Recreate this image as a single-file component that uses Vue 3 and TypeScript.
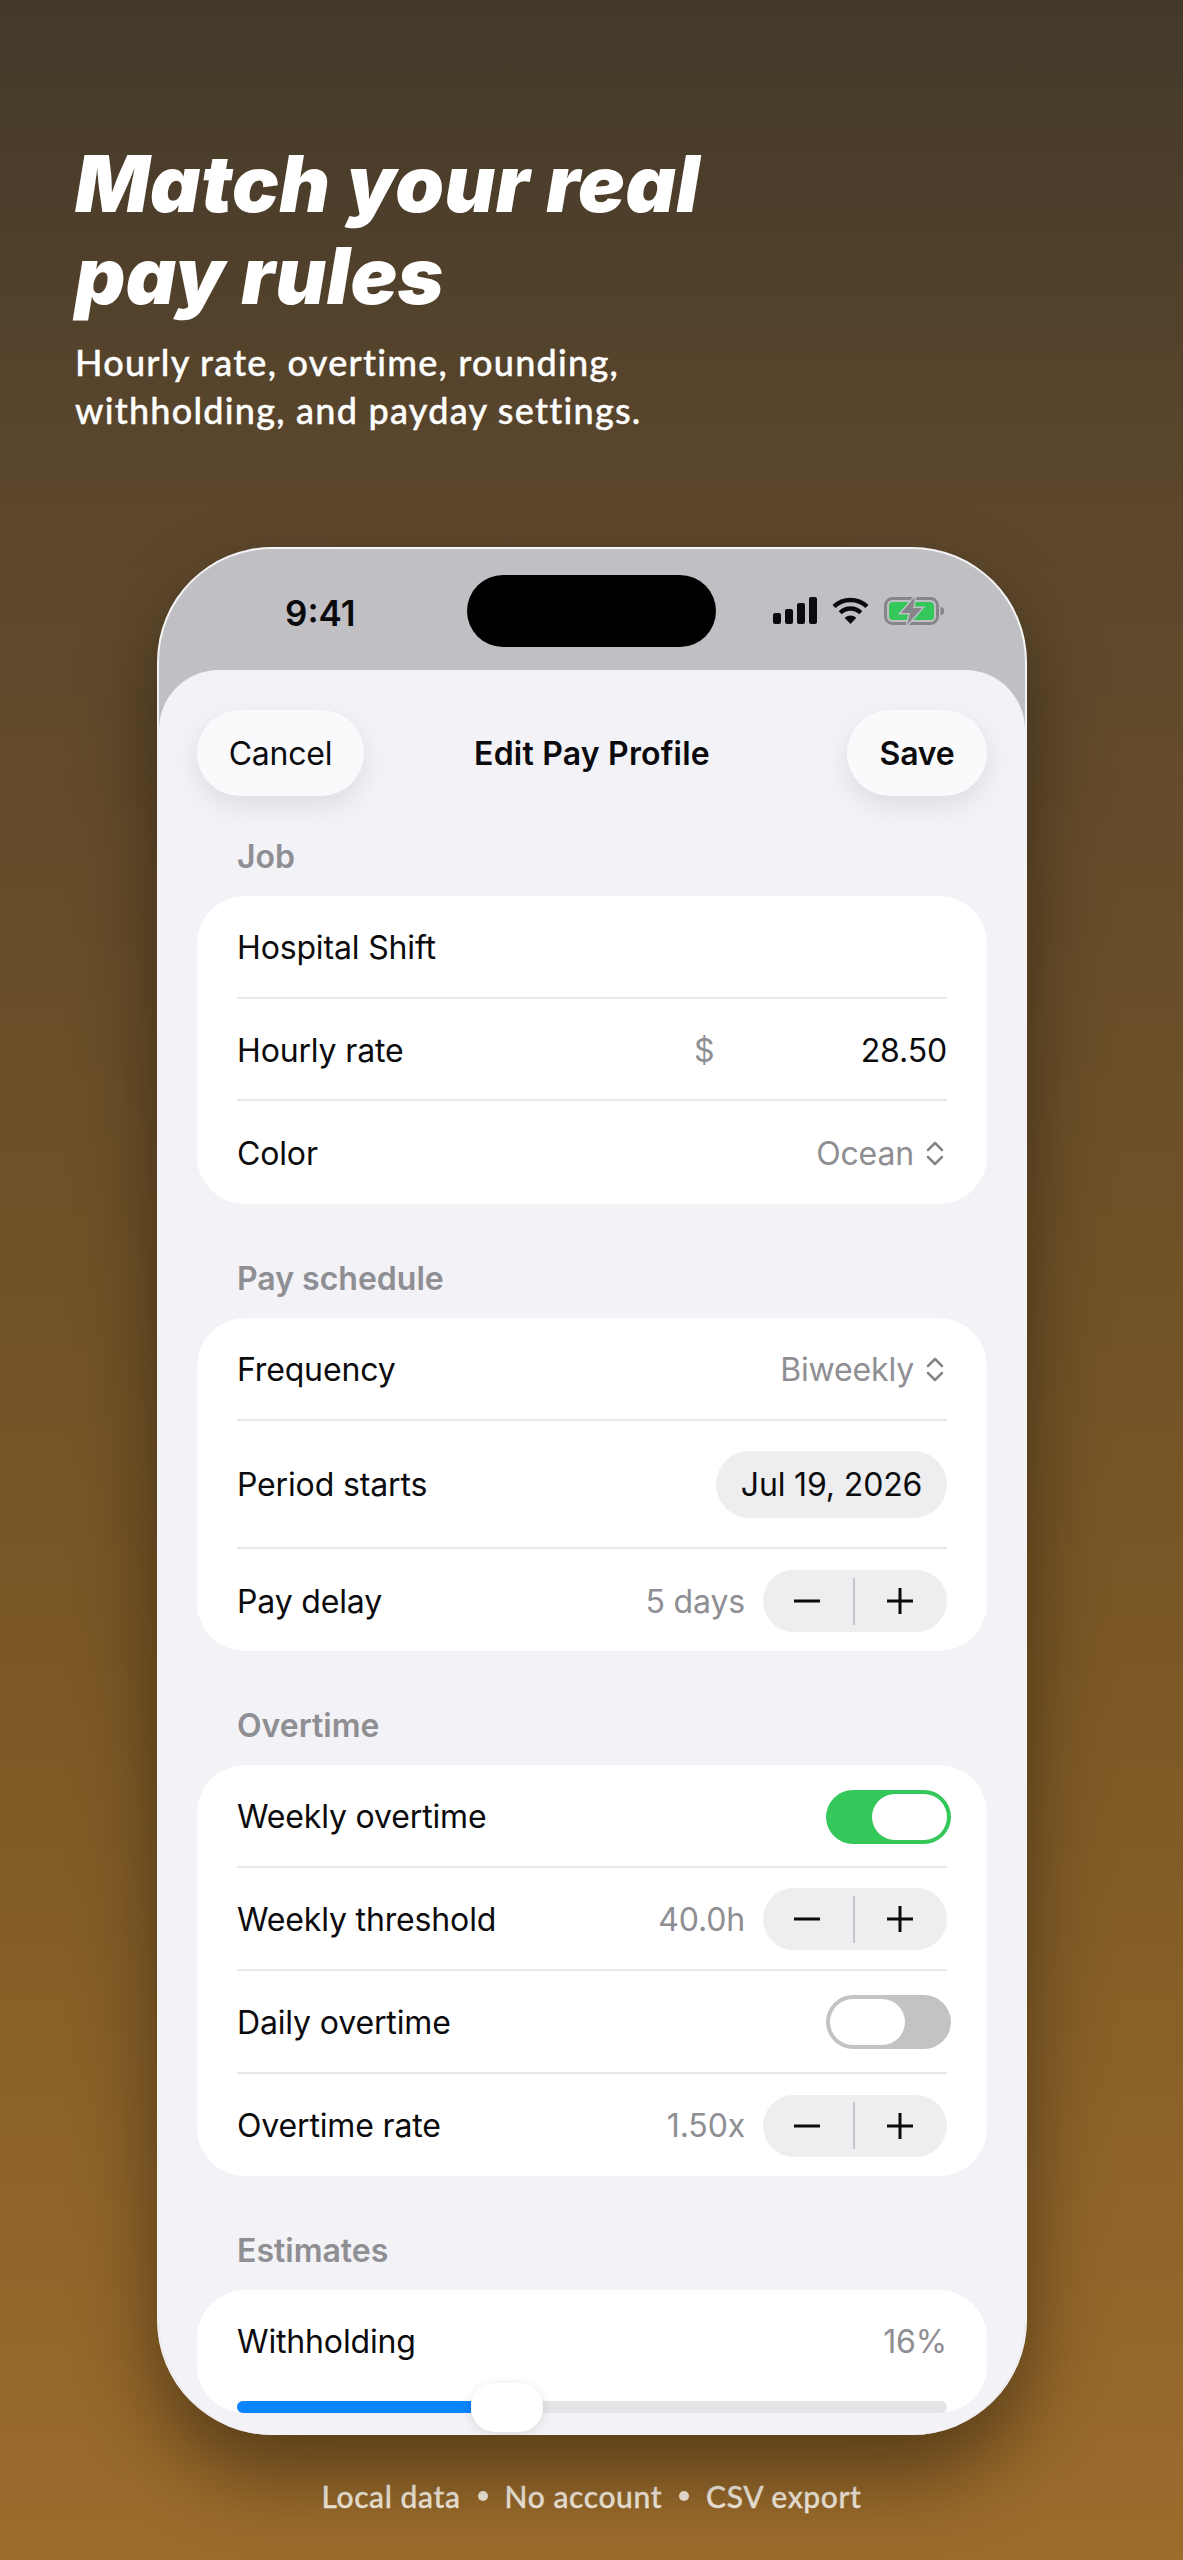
<script setup lang="ts">
type Stepper = { label: string; value: string };

const scheduleStepper: Stepper = { label: "Pay delay", value: "5 days" };
const thresholdStepper: Stepper = { label: "Weekly threshold", value: "40.0h" };
const rateStepper: Stepper = { label: "Overtime rate", value: "1.50x" };
const withholding = 33;
</script>

<template>
  <div class="page">
    <header class="hero">
      <h1 class="hero-title">Match your real<br />pay rules</h1>
      <p class="hero-sub">Hourly rate, overtime, rounding,<br />withholding, and payday settings.</p>
    </header>

    <div class="phone">
      <div class="status">
        <span class="time">9:41</span>
        <div class="island"></div>
        <div class="status-icons">
          <svg width="44" height="27" viewBox="0 0 44 27" fill="#0b0b0d">
            <rect x="0" y="16" width="8" height="11" rx="2" />
            <rect x="12" y="12" width="8" height="15" rx="2" />
            <rect x="24" y="6" width="8" height="21" rx="2" />
            <rect x="36" y="0" width="8" height="27" rx="2" />
          </svg>
          <svg width="37" height="27" viewBox="0 0 37 27" fill="none">
            <path d="M2 9.5A24 24 0 0 1 35 9.5" stroke="#0b0b0d" stroke-width="4.4" />
            <path d="M8.2 15.8A14.6 14.6 0 0 1 28.8 15.8" stroke="#0b0b0d" stroke-width="4.4" />
            <path d="M12.6 20.8Q18.5 16.4 24.4 20.8L18.5 27Z" fill="#0b0b0d" />
          </svg>
          <svg width="61" height="28" viewBox="0 0 61 28" fill="none">
            <rect x="1.5" y="1.5" width="52" height="25" rx="7" stroke="#86868a" stroke-width="3" />
            <rect x="5" y="5" width="45" height="18" rx="4" fill="#34c759" />
            <path d="M56.500 9.500c2.500.6 3.800 2.400 3.800 4.500s-1.300 3.900-3.800 4.500z" fill="#86868a" />
            <path d="M31 0 17 16h9L23 28 38 11h-9z" fill="#86868a" stroke="#c0c0c4" stroke-width="3" paint-order="stroke" />
          </svg>
        </div>
      </div>

      <div class="sheet">
        <div class="nav">
          <button class="nav-btn cancel">Cancel</button>
          <div class="nav-title">Edit Pay Profile</div>
          <button class="nav-btn save">Save</button>
        </div>

        <div class="section-label first">Job</div>
        <div class="card">
          <div class="row"><span>Hospital Shift</span></div>
          <div class="row">
            <span>Hourly rate</span>
            <span class="rate"><span class="muted">$</span><span>28.50</span></span>
          </div>
          <div class="row">
            <span>Color</span>
            <span class="picker">Ocean
              <svg width="18" height="25" viewBox="0 0 18 25" fill="none" stroke="#86868a" stroke-width="2.500" stroke-linecap="round" stroke-linejoin="round">
                <path d="M2 9 9 2l7 7M2 16l7 7 7-7" />
              </svg>
            </span>
          </div>
        </div>

        <div class="section-label">Pay schedule</div>
        <div class="card">
          <div class="row">
            <span>Frequency</span>
            <span class="picker">Biweekly
              <svg width="18" height="25" viewBox="0 0 18 25" fill="none" stroke="#86868a" stroke-width="2.500" stroke-linecap="round" stroke-linejoin="round">
                <path d="M2 9 9 2l7 7M2 16l7 7 7-7" />
              </svg>
            </span>
          </div>
          <div class="row tall">
            <span>Period starts</span>
            <span class="date-pill">Jul 19, 2026</span>
          </div>
          <div class="row">
            <span>{{ scheduleStepper.label }}</span>
            <div class="stepper-wrap">
              <span class="muted">{{ scheduleStepper.value }}</span>
              <div class="stepper">
                <svg width="26" height="26" viewBox="0 0 26 26" stroke="#0b0b0d" stroke-width="3"><path d="M0 13h26" /></svg>
                <i class="stepper-line"></i>
                <svg width="26" height="26" viewBox="0 0 26 26" stroke="#0b0b0d" stroke-width="3"><path d="M0 13h26M13 0v26" /></svg>
              </div>
            </div>
          </div>
        </div>

        <div class="section-label">Overtime</div>
        <div class="card">
          <div class="row">
            <span>Weekly overtime</span>
            <div class="toggle on"><i class="knob"></i></div>
          </div>
          <div class="row">
            <span>{{ thresholdStepper.label }}</span>
            <div class="stepper-wrap">
              <span class="muted">{{ thresholdStepper.value }}</span>
              <div class="stepper">
                <svg width="26" height="26" viewBox="0 0 26 26" stroke="#0b0b0d" stroke-width="3"><path d="M0 13h26" /></svg>
                <i class="stepper-line"></i>
                <svg width="26" height="26" viewBox="0 0 26 26" stroke="#0b0b0d" stroke-width="3"><path d="M0 13h26M13 0v26" /></svg>
              </div>
            </div>
          </div>
          <div class="row">
            <span>Daily overtime</span>
            <div class="toggle"><i class="knob"></i></div>
          </div>
          <div class="row">
            <span>{{ rateStepper.label }}</span>
            <div class="stepper-wrap">
              <span class="muted">{{ rateStepper.value }}</span>
              <div class="stepper">
                <svg width="26" height="26" viewBox="0 0 26 26" stroke="#0b0b0d" stroke-width="3"><path d="M0 13h26" /></svg>
                <i class="stepper-line"></i>
                <svg width="26" height="26" viewBox="0 0 26 26" stroke="#0b0b0d" stroke-width="3"><path d="M0 13h26M13 0v26" /></svg>
              </div>
            </div>
          </div>
        </div>

        <div class="section-label">Estimates</div>
        <div class="card last">
          <div class="row plain">
            <span>Withholding</span>
            <span class="muted">16%</span>
          </div>
          <div class="slider">
            <div class="slider-fill" :style="{ width: withholding + '%' }"></div>
            <div class="slider-thumb" :style="{ left: withholding + '%' }"></div>
          </div>
        </div>
      </div>
    </div>

    <footer class="foot">
      <span>Local data</span><span class="dot"></span><span>No account</span><span class="dot"></span><span>CSV export</span>
    </footer>
  </div>
</template>

<style>
html,
body {
  margin: 0;
}
</style>

<style scoped>
.page {
  width: 1183px;
  height: 2560px;
  overflow: hidden;
  display: flex;
  flex-direction: column;
  background: linear-gradient(180deg, #43392a 0%, #5c472c 20%, #7b5825 65%, #9c6c2c 100%);
  font-family: Inter, "Liberation Sans", sans-serif;
  color: #0b0b0d;
}
.hero {
  padding: 138px 0 0 75px;
  height: 547px;
  flex: none;
  box-sizing: border-box;
  color: #fff;
  font-family: Lato, "Open Sans", sans-serif;
}
.hero-title {
  margin: 0;
  font-family: Inter, "Open Sans", sans-serif;
  font-size: 78px;
  line-height: 92px;
  font-weight: 900;
  font-style: italic;
  letter-spacing: 0.5px;
}
.hero-sub {
  margin: 16px 0 0;
  font-size: 36px;
  line-height: 48px;
  font-weight: 500;
  letter-spacing: 1.25px;
  -webkit-text-stroke: 0.4px #fff;
}
.phone {
  position: relative;
  width: 870px;
  height: 1888px;
  margin: 0 0 0 157px;
  box-sizing: border-box;
  flex: none;
  border: 2px solid #f4f4f6;
  border-bottom: 0;
  border-radius: 115px;
  overflow: hidden;
  background: #c0c0c4;
  box-shadow: 0 40px 80px rgba(0, 0, 0, 0.42);
  display: flex;
  flex-direction: column;
}
.status {
  height: 121px;
  flex: none;
  display: flex;
  align-items: flex-start;
  position: relative;
}
.time {
  position: absolute;
  left: 126px;
  top: 43px;
  font-size: 35px;
  line-height: 42px;
  font-weight: 600;
}
.island {
  position: absolute;
  left: 308px;
  top: 26px;
  width: 249px;
  height: 72px;
  border-radius: 36px;
  background: #000;
}
.status-icons {
  position: absolute;
  left: 614px;
  top: 48px;
  display: flex;
  gap: 15px;
  align-items: flex-start;
}
.sheet {
  flex: 1;
  min-height: 0;
  background: #f2f2f7;
  border-radius: 60px 60px 0 0;
  padding: 40px 38px 0;
}
.nav {
  display: grid;
  grid-template-columns: 1fr auto 1fr;
  align-items: center;
}
.nav-btn {
  height: 86px;
  border: 0;
  border-radius: 43px;
  background: #fafafd;
  box-shadow: 0 10px 28px rgba(0, 0, 0, 0.09);
  font-family: inherit;
  font-size: 32px;
  letter-spacing: -0.2px;
  color: #0b0b0d;
  padding: 0;
}
.cancel {
  width: 167px;
  justify-self: start;
}
.save {
  width: 140px;
  justify-self: end;
  font-weight: 600;
}
.nav-title {
  font-size: 32px;
  font-weight: 600;
  letter-spacing: 0.2px;
}
.section-label {
  margin: 55px 0 19px 40px;
  height: 40px;
  line-height: 40px;
  font-size: 32px;
  font-weight: 600;
  color: #8e8e93;
}
.section-label.first {
  margin-top: 41px;
}
.card {
  background: #fff;
  border-radius: 48px;
  padding: 0 40px;
}
.row {
  height: 102.7px;
  box-sizing: border-box;
  padding-top: 2px;
  display: flex;
  justify-content: space-between;
  align-items: center;
  font-size: 32px;
  letter-spacing: -0.15px;
  border-bottom: 2px solid #e8e8ea;
}
.row:last-child {
  border-bottom: 0;
}
.row.tall {
  height: 128px;
}
.row.plain {
  border-bottom: 0;
  padding-top: 0;
  height: 102px;
}
.muted {
  color: #8e8e93;
}
.rate {
  display: flex;
  width: 253px;
  justify-content: space-between;
}
.picker {
  display: flex;
  align-items: center;
  gap: 12px;
  color: #8e8e93;
}
.picker svg {
  margin-right: 3px;
}
.date-pill {
  height: 67px;
  width: 231px;
  border-radius: 34px;
  background: #eeeef0;
  display: flex;
  align-items: center;
  justify-content: center;
}
.stepper-wrap {
  display: flex;
  align-items: center;
  gap: 18px;
}
.stepper {
  width: 184px;
  height: 62px;
  border-radius: 31px;
  background: #eeeef0;
  display: flex;
  align-items: center;
  justify-content: space-between;
  padding: 0 34px 0 31px;
  box-sizing: border-box;
}
.stepper-line {
  width: 2px;
  height: 47px;
  background: #c6c6ca;
}
.stepper svg {
  flex: none;
}
.toggle {
  width: 125px;
  height: 54px;
  box-sizing: border-box;
  border-radius: 27px;
  background: #c3c3c5;
  margin-right: -4px;
  padding: 4px;
  display: flex;
}
.toggle.on {
  background: #34c759;
  justify-content: flex-end;
}
.knob {
  width: 75px;
  height: 46px;
  border-radius: 23px;
  background: #fff;
}
.slider {
  position: relative;
  height: 12px;
  margin-top: 9px;
  margin-bottom: 60px;
  border-radius: 6px;
  background: #e5e5e8;
}
.slider-fill {
  height: 100%;
  border-radius: 6px 0 0 6px;
  background: #0a84ff;
}
.slider-thumb {
  position: absolute;
  top: -18px;
  width: 72px;
  height: 49px;
  border-radius: 24px;
  background: #fff;
  box-shadow: 0 2px 12px rgba(0, 0, 0, 0.1);
}
.foot {
  margin-top: 43px;
  display: flex;
  justify-content: center;
  align-items: center;
  gap: 16px;
  color: #fbf3e4;
  font-family: Lato, "Open Sans", sans-serif;
  font-size: 30px;
  font-weight: 500;
  letter-spacing: 0.6px;
  -webkit-text-stroke: 0.3px #fbf3e4;
}
.dot {
  width: 10px;
  height: 10px;
  border-radius: 50%;
  background: #fbf3e4;
  margin: 0 1px;
}
</style>
